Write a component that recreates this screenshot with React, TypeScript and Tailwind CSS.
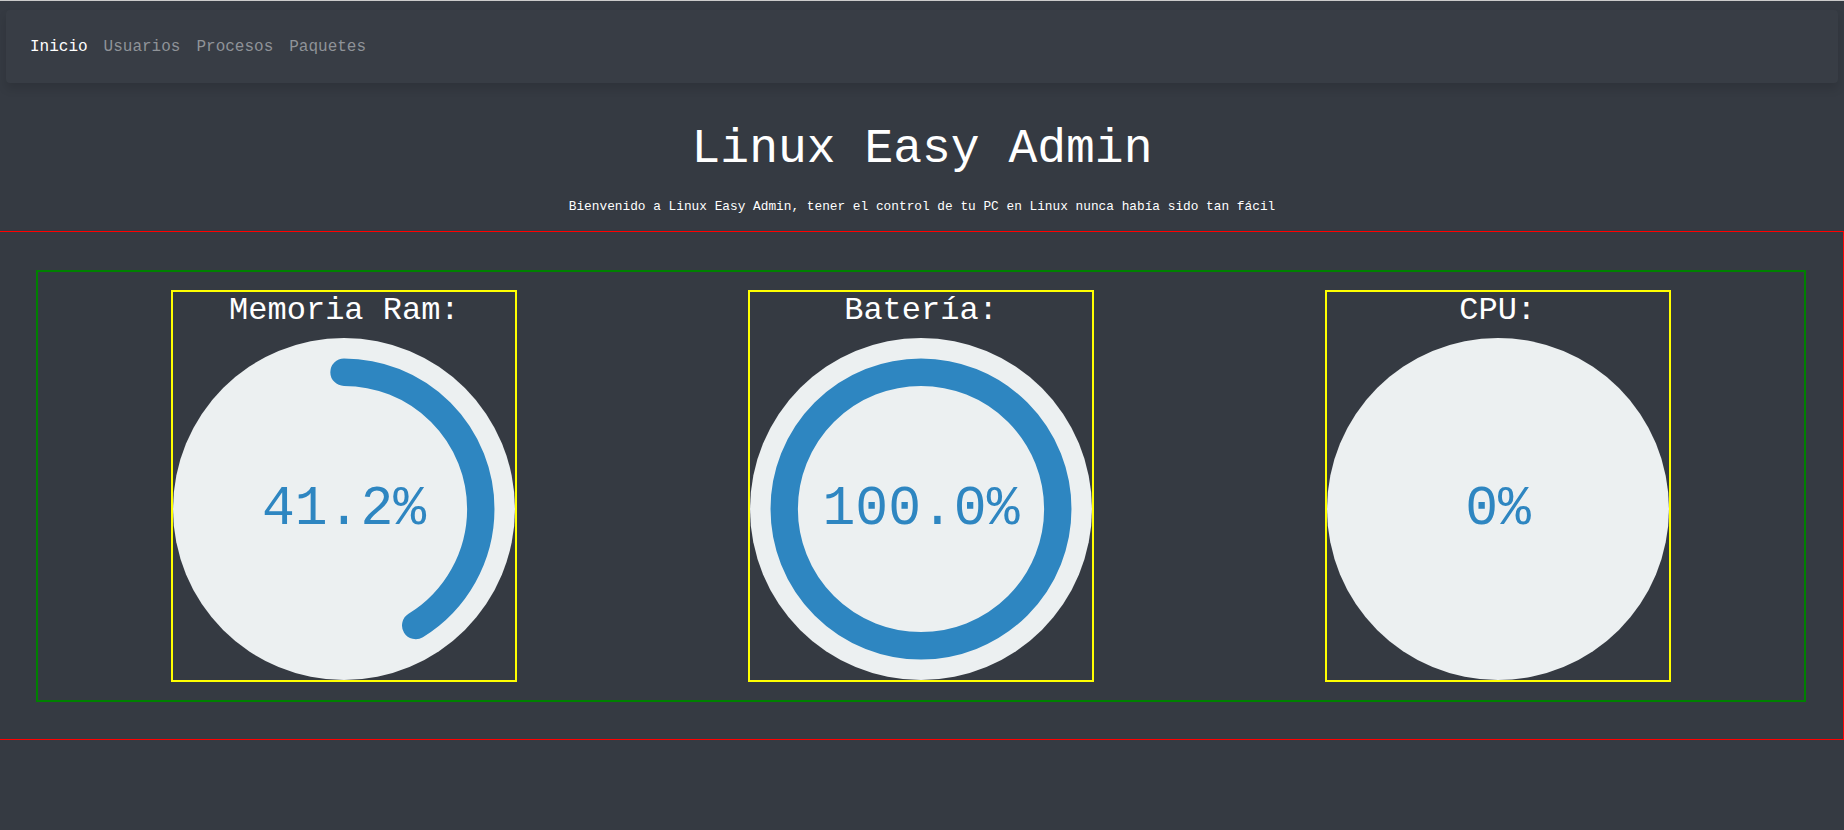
import React from 'react';

const MONO = { fontFamily: '"Liberation Mono", "DejaVu Sans Mono", monospace' };

const links = [
    { label: 'Inicio', active: true },
    { label: 'Usuarios', active: false },
    { label: 'Procesos', active: false },
    { label: 'Paquetes', active: false },
];

const Gauge: React.FC<{ value: number; text: string }> = ({ value, text }) => {
    const r = 40;
    const len = 2 * Math.PI * r;
    return (
        <svg viewBox="0 0 100 100" className="block w-full">
            <circle cx="50" cy="50" r="50" fill="#ecf0f1" />
            {value > 0 && (
                <path
                    d="M 50,50 m 0,-40 a 40,40 0 1 1 0,80 a 40,40 0 1 1 0,-80"
                    fill="none"
                    stroke="#2e86c1"
                    strokeWidth="8"
                    strokeLinecap="round"
                    strokeDasharray={`${len} ${len}`}
                    strokeDashoffset={len * (1 - value / 100)}
                />
            )}
            <text
                x="50"
                y="50"
                textAnchor="middle"
                dominantBaseline="central"
                fontSize="16"
                fill="#2e86c1"
                style={MONO}
            >
                {text}
            </text>
        </svg>
    );
};

const StatCard: React.FC<{ title: string; value: number; text: string }> = ({ title, value, text }) => (
    <div className="w-[346px] mx-auto border-2 border-[#ffff00]">
        <h2 className="text-[32px] leading-[1.2] mb-2 text-center text-white">{title}</h2>
        <Gauge value={value} text={text} />
    </div>
);

export default function App() {
    return (
        <div className="min-h-screen w-full bg-[#353a42] border-t border-[#c9c9c9] text-white pt-[9px]" style={MONO}>
            <nav className="mx-[6px] h-[73px] rounded bg-[#383d45] shadow-[0_6px_10px_rgba(0,0,0,0.12)] flex items-center px-4">
                {links.map(link => (
                    <a
                        key={link.label}
                        href="#"
                        className={`px-2 text-[16px] ${link.active ? 'text-white' : 'text-[#8f9398]'}`}
                    >
                        {link.label}
                    </a>
                ))}
            </nav>

            <header className="pt-[38px] pb-[15px] text-center">
                <h1 className="text-[48px] leading-[1.2] text-white">Linux Easy Admin</h1>
                <p className="mt-[18px] text-[12.8px] leading-[1.5] text-white">
                    Bienvenido a Linux Easy Admin, tener el control de tu PC en Linux nunca había sido tan fácil
                </p>
            </header>

            {/* debug-style bordered sections */}
            <section className="border-y border-r border-[#ff0000] pl-9 pr-[37px] pt-[38px] pb-[37px]">
                <div className="border-2 border-[#008000] p-[18px] grid grid-cols-3">
                    <StatCard title="Memoria Ram:" value={41.2} text="41.2%" />
                    <StatCard title="Batería:" value={100} text="100.0%" />
                    <StatCard title="CPU:" value={0} text="0%" />
                </div>
            </section>
        </div>
    );
}
